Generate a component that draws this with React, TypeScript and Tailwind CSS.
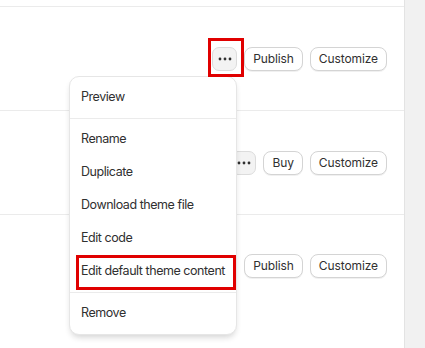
import React from 'react';

type Row = { id: number; primary: string; height: string };

const rows: Row[] = [
  { id: 1, primary: 'Publish', height: 'h-[104px]' },
  { id: 2, primary: 'Buy', height: 'h-[104px]' },
  { id: 3, primary: 'Publish', height: 'h-[103px]' },
];

function Dots() {
  return (
    <svg width="14" height="4" viewBox="0 0 14 4" fill="#303030">
      <circle cx="2" cy="2" r="1.4" />
      <circle cx="7" cy="2" r="1.4" />
      <circle cx="12" cy="2" r="1.4" />
    </svg>
  );
}

function Btn({ children }: { children: React.ReactNode }) {
  return (
    <button className="h-[24px] px-[8px] rounded-[8px] border border-[#d4d4d4] bg-white text-[12px] leading-none text-[#303030] tracking-[-0.1px] shadow-[0_1px_0_rgba(0,0,0,0.06)]">
      {children}
    </button>
  );
}

function MenuItem({ label }: { label: string }) {
  return (
    <div className="h-[33px] flex items-center px-[5px] text-[12.5px] tracking-[-0.45px] whitespace-nowrap text-[#303030]">
      {label}
    </div>
  );
}

export default function App() {
  return (
    <div className="flex h-[348px] w-[425px] overflow-hidden bg-white font-['Inter',sans-serif]">
      <div className="relative w-[405px] flex flex-col pt-[6px] border-r border-[#e3e3e3]">
        {rows.map((row) => (
          <div
            key={row.id}
            className={`${row.height} border-t border-[#ebebeb] flex items-center justify-end gap-[7px] pr-[17px]`}
          >
            <button className="h-[24px] w-[25px] rounded-[7px] border border-[#dcdcdc] bg-[#f3f3f3] flex items-center justify-center">
              <Dots />
            </button>
            <Btn>{row.primary}</Btn>
            <Btn>Customize</Btn>
          </div>
        ))}

        {/* popover menu */}
        <div className="absolute left-[69px] top-[76px] w-[168px] rounded-[10px] bg-white border border-[#e6e6e6] shadow-[0_4px_6px_-2px_rgba(26,26,26,0.2)]">
          <div className="py-[4px] px-[6px]">
            <MenuItem label="Preview" />
          </div>
          <div className="py-[4px] px-[6px] border-t border-[#ebebeb]">
            <MenuItem label="Rename" />
            <MenuItem label="Duplicate" />
            <MenuItem label="Download theme file" />
            <MenuItem label="Edit code" />
            <MenuItem label="Edit default theme content" />
          </div>
          <div className="py-[4px] px-[6px] border-t border-[#ebebeb]">
            <MenuItem label="Remove" />
          </div>
        </div>

        {/* highlight boxes */}
        <div className="absolute left-[208px] top-[38px] w-[36px] h-[39px] border-[3px] border-[#e00000]" />
        <div className="absolute left-[76px] top-[255px] w-[160px] h-[35px] border-[3px] border-[#e00000]" />
      </div>
      <div className="flex-1 bg-[#f1f1f1]" />
    </div>
  );
}
